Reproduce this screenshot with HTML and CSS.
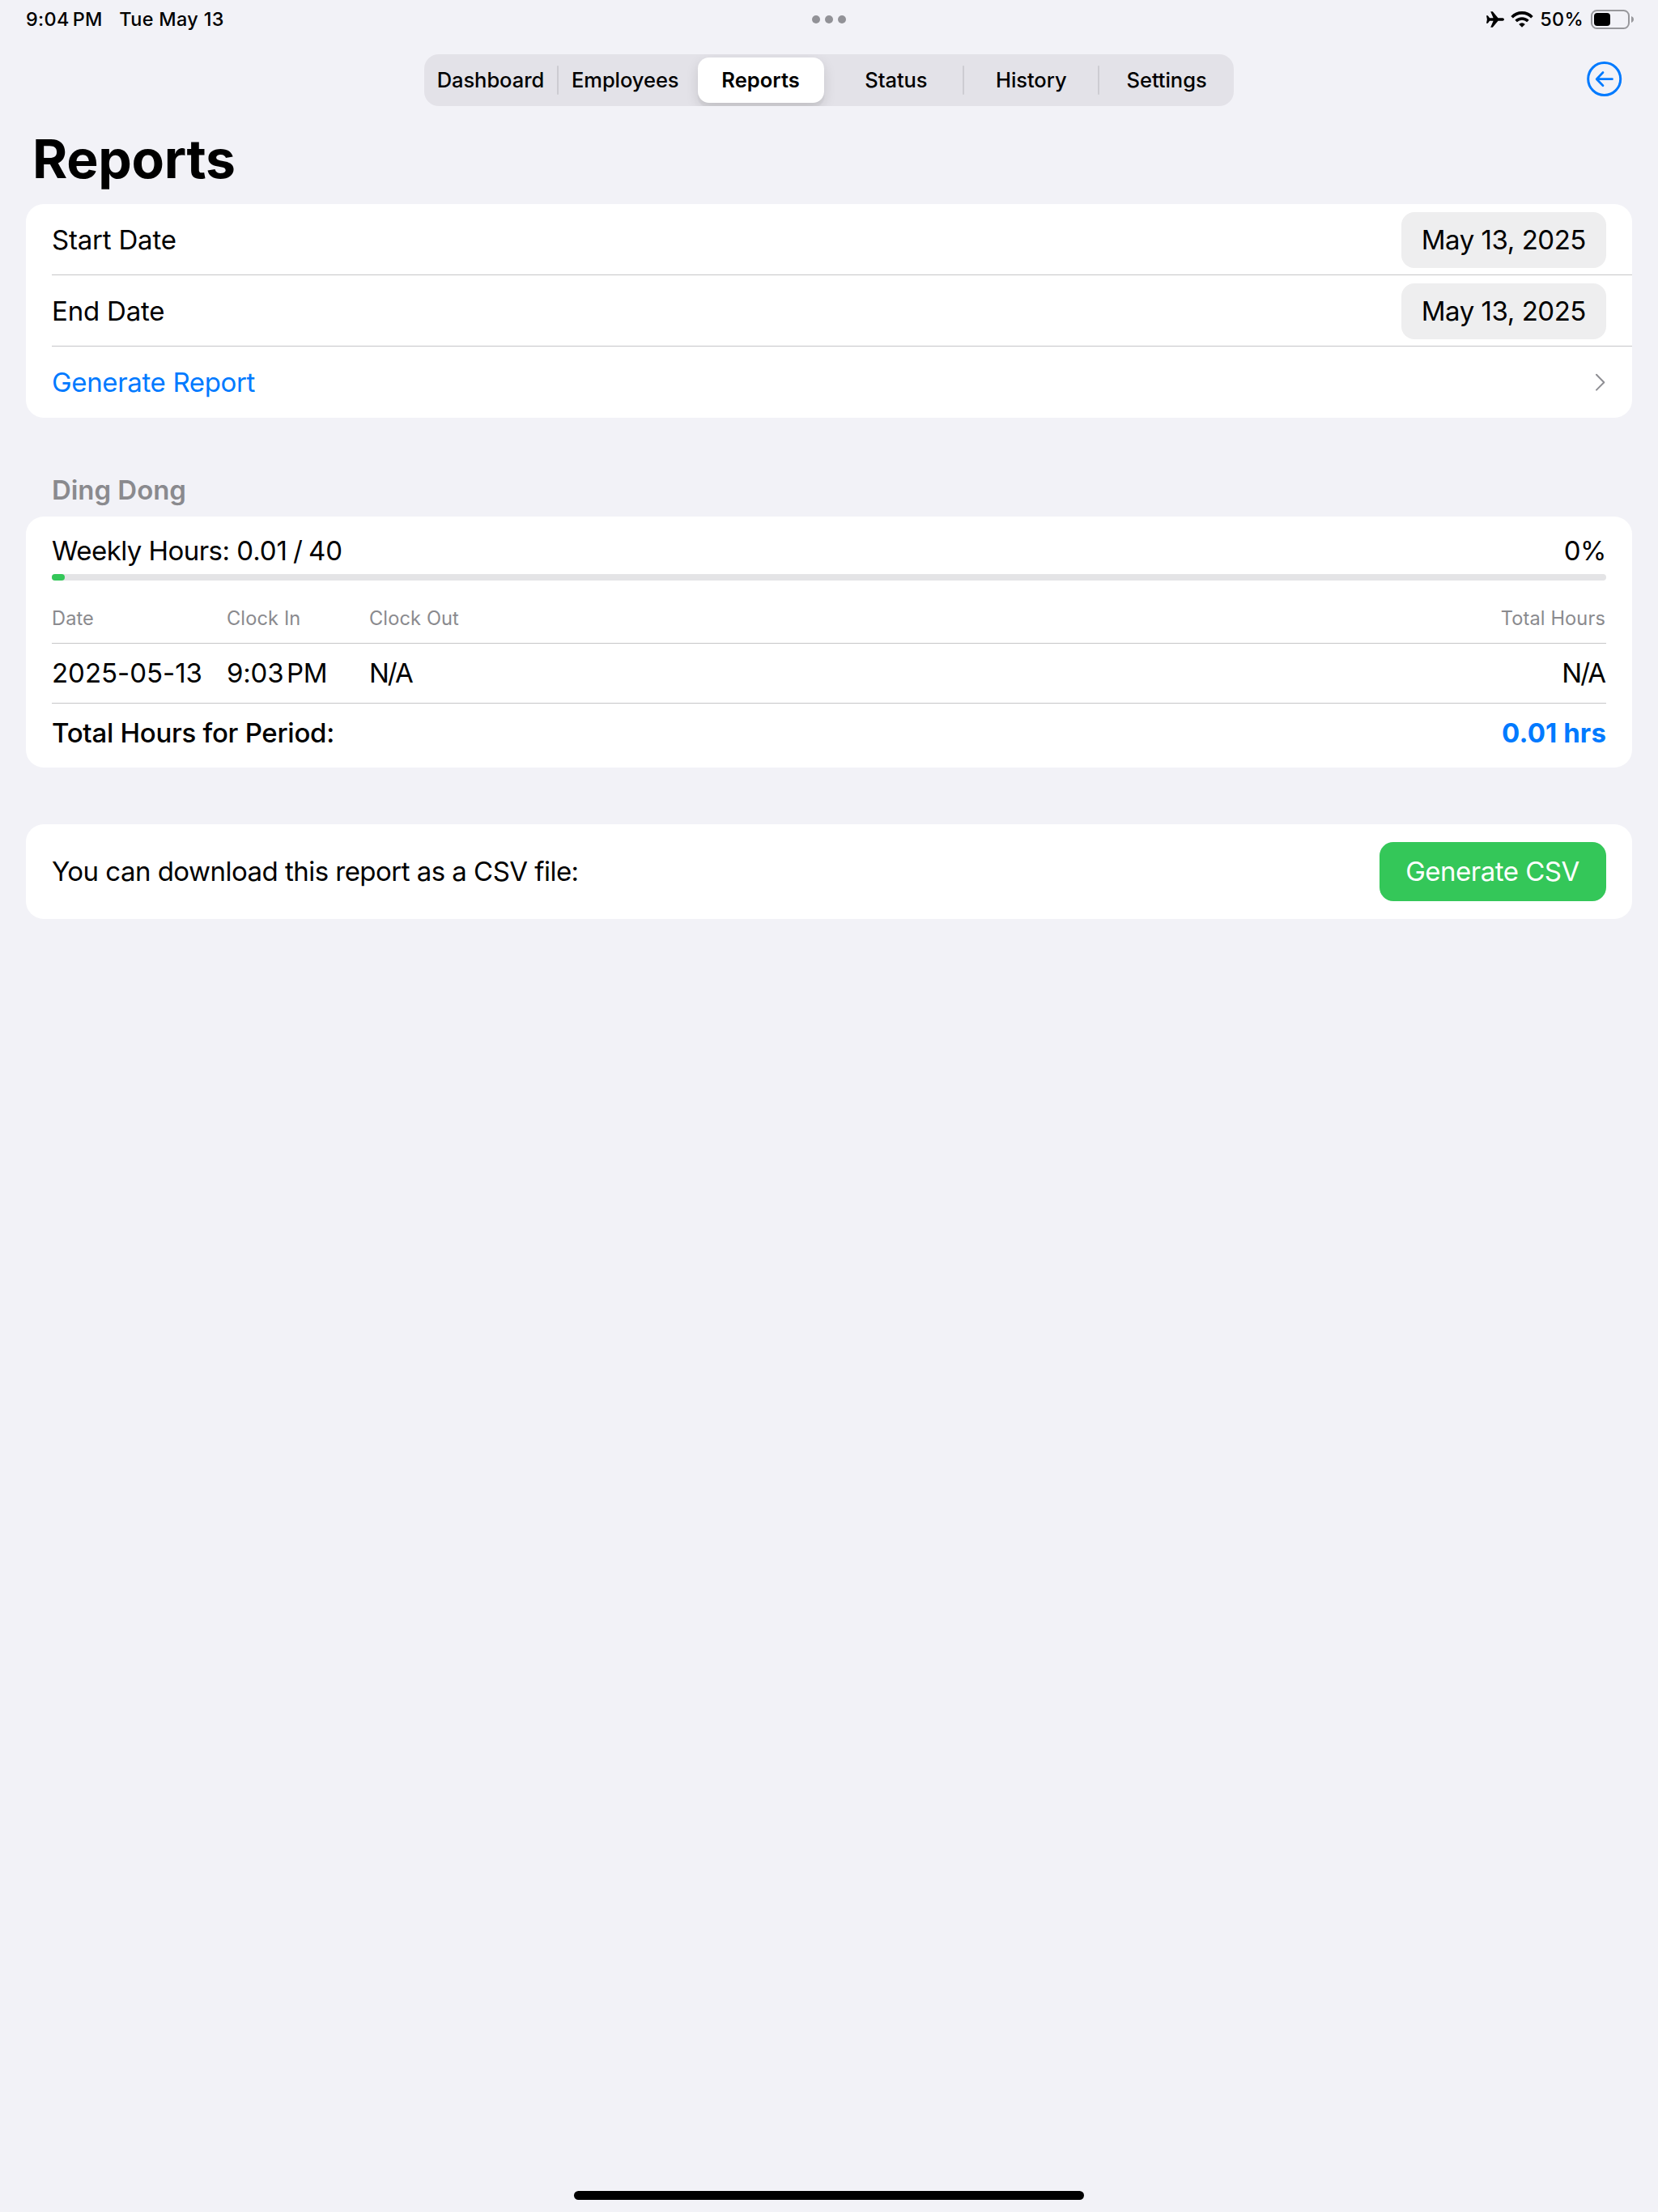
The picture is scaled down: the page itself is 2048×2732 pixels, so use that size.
FILE: index.html
```
<!DOCTYPE html>
<html lang="en">
  <head>
    <meta charset="UTF-8" />
    <meta name="viewport" content="width=device-width, initial-scale=1.0" />
    <title>Reports</title>
    <link rel="stylesheet" href="styles.css">
  </head>
  <body>
    <header class="status-bar">
      <div class="status-left">
        <span class="time">9:04 PM</span>
        <span class="day">Tue May 13</span>
      </div>
      <div class="dots"><i></i><i></i><i></i></div>
      <div class="status-right">
        <svg class="airplane" width="22" height="20" viewBox="0 0 22 20">
          <path d="M22 10C22 8.6 20.5 8.2 18.5 8.2H14.5L7.8.3H5.2L8.6 8.2H4L1.8 5.2H0L.9 10 0 14.8H1.8L4 11.8H8.6L5.2 19.7H7.8L14.5 11.8H18.5C20.5 11.8 22 11.4 22 10Z" />
        </svg>
        <svg class="wifi" width="28" height="20" viewBox="0 0 28 20">
          <g fill="none" stroke="#000" stroke-width="3.6">
            <path d="M1.6 7.2A17.2 17.2 0 0 1 26.4 7.2" />
            <path d="M6.6 12.1A10.4 10.4 0 0 1 21.4 12.1" />
          </g>
          <path d="M14 19.8L10.2 15.9A5.4 5.4 0 0 1 17.8 15.9Z" />
        </svg>
        <span class="percent">50%</span>
        <svg class="battery" width="54" height="24" viewBox="0 0 54 24">
          <rect x="1" y="1" width="46" height="22" rx="6.5" fill="none" stroke="#98989c" stroke-width="2" />
          <rect x="4" y="4" width="20" height="16" rx="4" />
          <path d="M50 8C52 8.8 53 10.2 53 12S52 15.2 50 16Z" fill="#98989c" />
        </svg>
      </div>
    </header>

    <div class="toolbar">
      <nav class="tabs">
        <a class="tab">Dashboard</a>
        <span class="divider"></span>
        <a class="tab">Employees</a>
        <span class="divider hidden"></span>
        <a class="tab active">Reports</a>
        <span class="divider hidden"></span>
        <a class="tab">Status</a>
        <span class="divider"></span>
        <a class="tab">History</a>
        <span class="divider"></span>
        <a class="tab">Settings</a>
      </nav>
      <svg class="back" width="44" height="44" viewBox="0 0 44 44" fill="none" stroke="#007aff" stroke-width="3" stroke-linecap="round" stroke-linejoin="round">
        <circle cx="21.7" cy="21.5" r="20" />
        <path d="M31.5 21.7H12.3M20 13.5L12.2 21.7L20 29.7" stroke-width="2.7" />
      </svg>
    </div>

    <main>
      <h1>Reports</h1>

      <section class="card form">
        <div class="row">
          <span class="label">Start Date</span>
          <span class="date">May 13, 2025</span>
        </div>
        <div class="row">
          <span class="label">End Date</span>
          <span class="date">May 13, 2025</span>
        </div>
        <div class="row">
          <a class="link">Generate Report</a>
          <svg class="chevron" width="14" height="22" viewBox="0 0 14 22" fill="none" stroke="#8e8e93" stroke-width="2" stroke-linecap="round" stroke-linejoin="round">
            <path d="M2 1.8L11.3 11.2L2 20.6" />
          </svg>
        </div>
      </section>

      <h2>Ding Dong</h2>
      <section class="card report">
        <div class="line">
          <span><span class="weekly">Weekly Hours:</span> <span class="weekly-value">0.01 / 40</span></span>
          <span>0%</span>
        </div>
        <div class="progress"><div class="progress-fill"></div></div>
        <div class="grid grid-head">
          <span>Date</span>
          <span>Clock In</span>
          <span>Clock Out</span>
          <span class="end">Total Hours</span>
        </div>
        <div class="grid grid-row">
          <span class="num">2025-05-13</span>
          <span class="clock">9:03 PM</span>
          <span class="na">N/A</span>
          <span class="na end">N/A</span>
        </div>
        <div class="line total">
          <span class="total-label">Total Hours for Period:</span>
          <span class="total-value">0.01 hrs</span>
        </div>
      </section>

      <section class="card download">
        <span class="note">You can download this report as a CSV file:</span>
        <button>Generate CSV</button>
      </section>
    </main>

    <div class="home-bar"></div>
  </body>
</html>
```
FILE: styles.css
```
* {
  box-sizing: border-box;
}
body {
  font-family: Inter, "Liberation Sans", sans-serif;
  font-size: 33px;
  line-height: 40px;
  letter-spacing: -0.45px;
  background-color: #f2f2f7;
  color: #000;
  margin: 0;
  min-height: 100vh;
  display: flex;
  flex-direction: column;
}

/* status bar */
.status-bar {
  display: grid;
  grid-template-columns: 1fr auto 1fr;
  align-items: center;
  height: 48px;
  padding: 0 30px 0 32px;
  font-size: 23.4px;
  font-weight: 500;
  letter-spacing: 0.35px;
}
.status-left {
  display: flex;
  gap: 20.5px;
}
.time {
  word-spacing: -2.5px;
}
.dots {
  display: flex;
  gap: 6px;
  margin-right: 2px;
}
.dots i {
  width: 10px;
  height: 10px;
  border-radius: 50%;
  background-color: #929297;
}
.status-right {
  display: flex;
  align-items: center;
  justify-content: flex-end;
}
.wifi {
  margin: 0 8px;
}
.battery {
  margin-left: 9px;
  margin-right: -1px;
}

/* toolbar */
.toolbar {
  display: grid;
  grid-template-columns: 1fr 1000px 1fr;
  align-items: center;
  height: 64px;
  margin-top: 19px;
  padding: 0 44px;
}
.tabs {
  grid-column: 2;
  display: flex;
  align-items: center;
  height: 64px;
  border-radius: 18px;
  background-color: #e3e2e8;
  overflow: hidden;
}
.tab {
  width: 165px;
  text-align: center;
  font-size: 25.5px;
  font-weight: 500;
  letter-spacing: -0.05px;
}
.tab:first-child {
  width: 164px;
}
.tab:last-child {
  width: 166px;
}
.tab.active {
  width: 156px;
  margin: 0 5px;
  line-height: 56px;
  border-radius: 14px;
  background-color: white;
  font-weight: 600;
  letter-spacing: 0.05px;
  box-shadow: 0 6px 16px rgba(0, 0, 0, 0.12), 0 6px 2px rgba(0, 0, 0, 0.04);
}
.divider {
  width: 2px;
  height: 36px;
  border-radius: 1px;
  background-color: #cdccd2;
}
.divider.hidden {
  background-color: transparent;
}
.back {
  justify-self: end;
  margin-bottom: 2px;
}

/* content */
main {
  flex: 1;
  padding: 27px 32px 0;
}
h1 {
  margin: 0 0 18px 8px;
  font-size: 66px;
  line-height: 76px;
  font-weight: 700;
  letter-spacing: -0.3px;
}
h2 {
  margin: 69px 0 13px 32px;
  font-size: 33px;
  line-height: 40px;
  font-weight: 600;
  letter-spacing: -0.05px;
  color: #8a8a8e;
}
.card {
  border-radius: 22px;
  background-color: white;
}
.form {
  padding-left: 32px;
}
.row {
  display: flex;
  align-items: center;
  justify-content: space-between;
  height: 88px;
  padding-right: 32px;
  border-bottom: 1px solid #c6c6c8;
}
.row:last-child {
  border-bottom: none;
}
.label {
  letter-spacing: -0.2px;
}
.date {
  margin-top: 2px;
  padding: 0 25px;
  line-height: 69px;
  border-radius: 16px;
  background-color: #eeeeef;
}
.link {
  letter-spacing: -0.35px;
  color: #007aff;
}
.report {
  height: 310px;
  padding: 22px 32px 0;
}
.line {
  display: flex;
  justify-content: space-between;
}
.weekly {
  letter-spacing: -0.55px;
}
.weekly-value {
  letter-spacing: -0.1px;
  word-spacing: -2px;
}
.progress {
  height: 8px;
  margin-top: 9px;
  border-radius: 4px;
  background-color: #e4e4e6;
}
.progress-fill {
  width: 16px;
  height: 8px;
  border-radius: 4px;
  background-color: #34c759;
}
.grid {
  display: grid;
  grid-template-columns: 216px 176px 1fr auto;
  border-bottom: 1px solid #c6c6c8;
}
.grid-head {
  height: 78px;
  padding-top: 32px;
  font-size: 23.6px;
  line-height: 30px;
  letter-spacing: 0.12px;
  color: #8a8a8e;
}
.grid-row {
  height: 74px;
  padding-top: 16px;
}
.num {
  letter-spacing: -0.02px;
}
.clock {
  letter-spacing: -0.2px;
  word-spacing: -5.5px;
}
.na {
  letter-spacing: -2px;
}
.end {
  padding-right: 1px;
}
.na.end {
  padding-right: 2px;
}
.total {
  padding-top: 16px;
}
.total-label {
  font-weight: 500;
  letter-spacing: -0.27px;
}
.total-value {
  font-weight: 700;
  letter-spacing: 0.1px;
  color: #007aff;
}
.download {
  display: flex;
  align-items: center;
  justify-content: space-between;
  height: 117px;
  margin-top: 70px;
  padding: 0 32px;
}
.note {
  margin-bottom: 2px;
  letter-spacing: -0.53px;
}
button {
  width: 280px;
  height: 73px;
  padding: 0 7px 2px 6px;
  border: none;
  border-radius: 17px;
  background-color: #34c759;
  color: white;
  font: inherit;
  letter-spacing: -0.5px;
}
.home-bar {
  align-self: center;
  width: 630px;
  height: 11px;
  margin-bottom: 15px;
  border-radius: 6px;
  background-color: #000;
}
```
